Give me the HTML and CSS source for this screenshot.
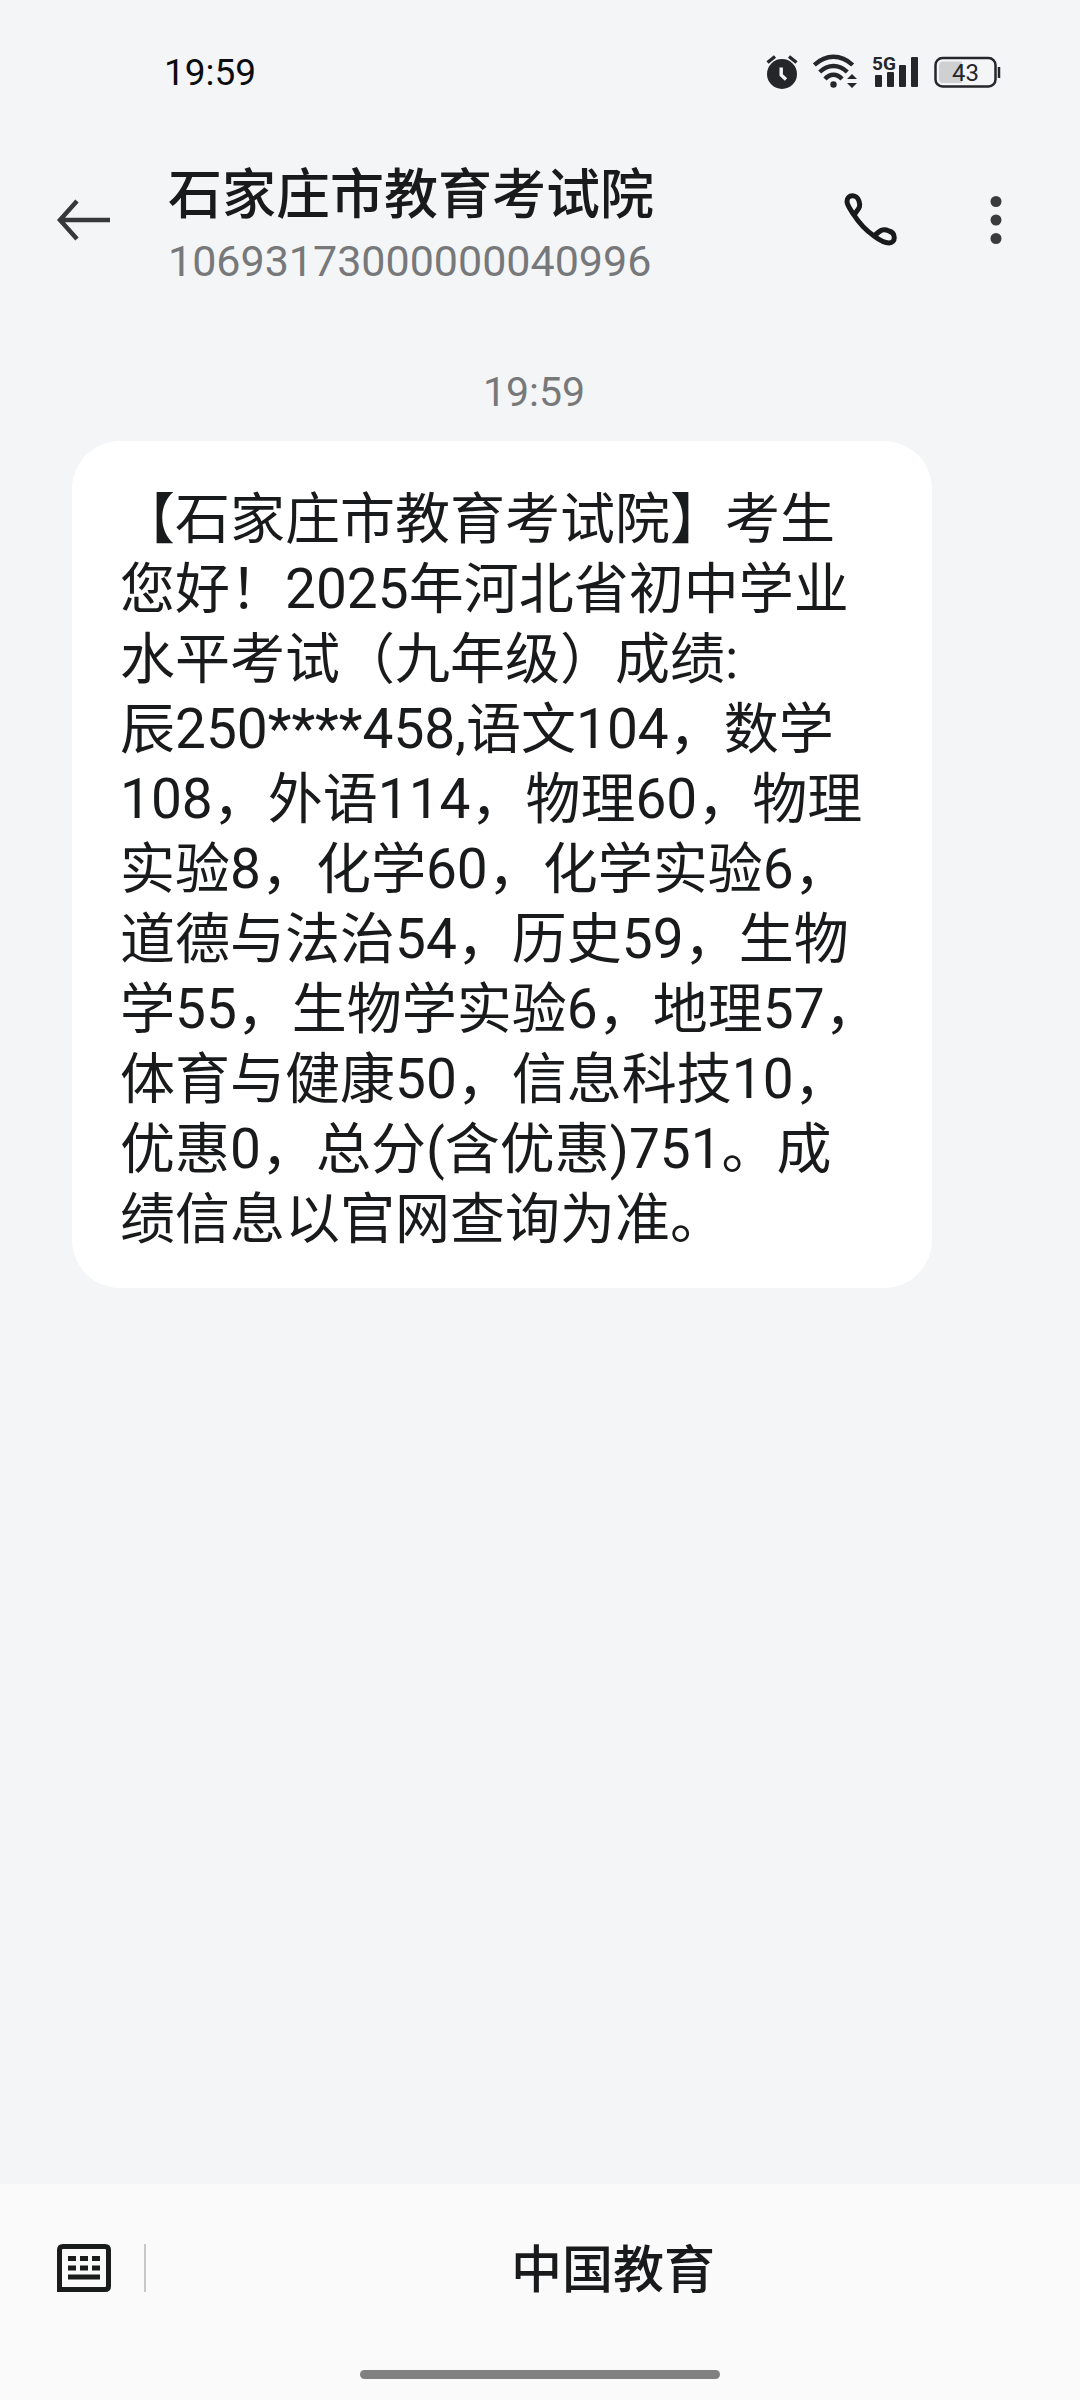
FILE: index.html
```html
<!DOCTYPE html>
<html lang="zh-CN">
<head>
    <meta charset="utf-8">
    <meta name="viewport" content="width=device-width, initial-scale=1">
    <title>石家庄市教育考试院</title>
    <link rel="stylesheet" href="styles.css">
</head>
<body>
    <div class="status-bar">
        <span class="clock">19:59</span>
        <div class="status-icons">
            <!-- alarm -->
            <svg width="32" height="36" viewBox="0 0 32 36">
                <circle cx="16" cy="20" r="15" fill="#25262a"/>
                <path d="M1.5 8.5L9 2.5M30.5 8.5L23 2.5" stroke="#25262a" stroke-width="3.4" fill="none"/>
                <path d="M15.2 13.5V21L20 25.5" stroke="#f3f5f7" stroke-width="3.4" fill="none"/>
            </svg>
            <!-- wifi -->
            <svg width="44" height="36" viewBox="0 0 44 36">
                <g fill="none" stroke="#25262a" stroke-width="4.4">
                    <path d="M1.3 11C13 0 28 0 39.7 11"/>
                    <path d="M6.7 18C15 10 26 10 34.3 18"/>
                    <path d="M12 25C17 19.3 24 19.3 29 25"/>
                </g>
                <circle cx="20.5" cy="30.5" r="3.2" fill="#25262a"/>
                <path d="M34 25L39 20L44 25ZM34 29L39 34L44 29Z" fill="#25262a"/>
            </svg>
            <!-- signal -->
            <svg class="signal" width="47" height="36" viewBox="0 0 47 36">
                <g fill="#25262a">
                    <rect x="3" y="21" width="7" height="12" rx="1"/>
                    <rect x="15" y="18" width="7" height="15" rx="1"/>
                    <rect x="27" y="11" width="7" height="22" rx="1"/>
                    <rect x="39" y="3" width="7" height="30" rx="1"/>
                </g>
                <text class="net" x="0" y="16">5G</text>
            </svg>
            <!-- battery -->
            <svg width="68" height="36" viewBox="0 0 68 36">
                <rect x="1.5" y="4" width="60" height="28.5" rx="7" fill="none" stroke="#25262a" stroke-width="2.5"/>
                <path d="M9 7.5H28V29H9Q5 29 5 25V11.5Q5 7.5 9 7.5Z" fill="#cfd0d2"/>
                <path d="M65 13V24" stroke="#25262a" stroke-width="2.5"/>
                <text class="level" x="31.5" y="27" text-anchor="middle">43</text>
            </svg>
        </div>
    </div>

    <header class="header">
        <button class="icon-btn" type="button" aria-label="返回">
            <svg width="54" height="42" viewBox="0 0 54 42" fill="none" stroke="#37383a" stroke-width="4.5">
                <path d="M21 2L4 21L21 40M4 21H54"/>
            </svg>
        </button>
        <div class="contact">
            <h1>石家庄市教育考试院</h1>
            <p>10693173000000040996</p>
        </div>
        <button class="icon-btn" type="button" aria-label="拨打电话">
            <svg width="54" height="54" viewBox="0 0 54 54" fill="none" stroke="#191a1c" stroke-width="5" stroke-linejoin="round">
                <path d="M11 22C7 16 4 12 4 8.5C4 1 14 1 16 8C18 14 16 15 11 22C16 30 24 38 31 43C35 46 42 50 46 50C53 50 53 40 46 38C39 35 37 38 31 43"/>
            </svg>
        </button>
        <button class="icon-btn more" type="button" aria-label="更多">
            <svg width="12" height="50" viewBox="0 0 12 50" fill="#3a3b3d">
                <circle cx="6" cy="6.5" r="5.5"/>
                <circle cx="6" cy="25" r="5.5"/>
                <circle cx="6" cy="43.5" r="5.5"/>
            </svg>
        </button>
    </header>

    <main class="messages">
        <time class="time">19:59</time>
        <p class="bubble">【石家庄市教育考试院】考生您好！2025年河北省初中学业水平考试（九年级）成绩:<br>辰250****458,语文104，数学108，外语114，物理60，物理实验8，化学60，化学实验6，道德与法治54，历史59，生物学55，生物学实验6，地理57，体育与健康50，信息科技10，优惠0，总分(含优惠)751。成绩信息以官网查询为准。</p>
    </main>

    <footer class="footer">
        <div class="menu-bar">
            <button class="icon-btn keyboard" type="button" aria-label="键盘">
                <svg width="54" height="48" viewBox="0 0 54 48">
                    <path d="M2.5 45.5V6Q2.5 2.5 6 2.5H48Q51.5 2.5 51.5 6V42Q51.5 45.5 48 45.5Z" fill="none" stroke="#1a1b1b" stroke-width="5"/>
                    <path d="M11 14.5H19M23 14.5H31M35 14.5H43M11 24H19M23 24H31M35 24H43M11 33H43" stroke="#1a1b1b" stroke-width="5"/>
                </svg>
            </button>
            <button class="menu-item" type="button">中国教育</button>
        </div>
        <div class="home-bar"></div>
    </footer>
</body>
</html>
```
FILE: styles.css
```css
* { box-sizing: border-box; }
body {
    display: flex;
    flex-direction: column;
    min-height: 100vh;
    margin: 0;
    background: #f3f5f7;
    color: #191a1b;
    font-family: Roboto, "Noto Sans CJK SC", sans-serif;
}
h1, p { margin: 0; }
svg { display: block; }
button { padding: 0; border: 0; background: none; color: inherit; font-family: inherit; }

.status-bar {
    display: flex;
    justify-content: space-between;
    align-items: center;
    height: 144px;
    padding: 0 78px 0 164px;
}
.clock { font-size: 37px; font-weight: 400; color: #0c0d0e; }
.status-icons { display: flex; align-items: center; gap: 15px; }
.signal { overflow: visible; }
.net { font-size: 19px; font-weight: 700; fill: #25262a; }
.level { font-size: 24px; fill: #25262a; }

.header {
    display: flex;
    align-items: center;
    height: 152px;
    padding: 0 78px 0 56px;
}
.contact { flex: 1; margin-left: 58px; padding-top: 10px; }
.contact h1 { font-size: 54px; font-weight: 500; line-height: 72px; }
.contact p { font-size: 43px; line-height: 58px; color: #77787a; }
.more { margin-left: 93px; }

.messages {
    flex: 1;
    display: flex;
    flex-direction: column;
    padding: 68px 148px 48px 72px;
}
.time {
    align-self: center;
    margin: 0 0 21px 64px;
    font-size: 41px;
    line-height: 56px;
    color: #77787a;
}
.bubble {
    padding: 43px 48px 34px;
    border-radius: 48px;
    background: #fff;
    font-size: 55px;
    line-height: 70px;
}

.footer { background: #fafafa; }
.menu-bar { display: flex; align-items: center; height: 168px; padding-left: 57px; }
.keyboard { padding-right: 33px; border-right: 2px solid #c8c8c8; }
.menu-item { flex: 1; padding-top: 6px; font-size: 51px; font-weight: 500; line-height: 72px; }
.home-bar {
    width: 33.33%;
    height: 9px;
    margin: 18px auto 21px;
    border-radius: 5px;
    background: #808080;
}
```
